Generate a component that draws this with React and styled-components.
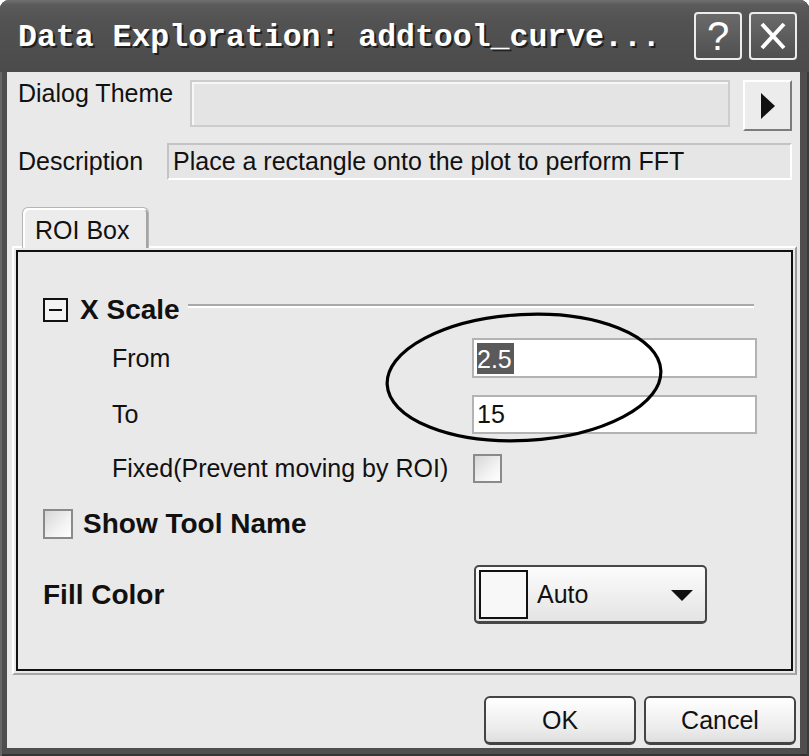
import React from 'react'
import styled, { createGlobalStyle } from 'styled-components'

const GlobalStyle = createGlobalStyle`
  html, body {
    margin: 0;
    padding: 0;
    background: #fff;
  }
  body {
    font-family: "Liberation Sans", Arial, sans-serif;
    color: #111;
  }
  * { box-sizing: border-box; }
`

const Window = styled.div`
  width: 809px;
  height: 756px;
  display: flex;
  flex-direction: column;
  background: #4e4e4e;
  border-radius: 9px 9px 0 0;
  overflow: hidden;
  box-shadow: inset 2px 0 0 #666, inset -2px 0 0 #3a3a3a, inset 0 -2px 0 #333;
`

const TitleBar = styled.div`
  height: 72px;
  flex: none;
  display: flex;
  align-items: center;
  gap: 7px;
  padding: 0 12px 0 18px;
  background: linear-gradient(#707070 0, #5a5a5a 5px, #525252 30%, #4b4b4b 100%);
`

const Title = styled.div`
  flex: 1;
  font-family: "Liberation Mono", "Courier New", monospace;
  font-weight: bold;
  font-size: 31.5px;
  color: #fff;
  text-shadow: 2px 2px 0 #202020;
  white-space: nowrap;
  margin-top: 2px;
`

const CaptionButton = styled.div`
  width: 48px;
  height: 48px;
  border: 2px solid #ececec;
  border-radius: 4px;
  background: linear-gradient(#6a6a6a, #505050);
  display: flex;
  align-items: center;
  justify-content: center;
  color: #fff;
  font-family: "Liberation Sans", Arial, sans-serif;
  font-size: 40px;
  line-height: 1;
`

const Client = styled.div`
  flex: 1;
  margin: 0 9px 8px 7px;
  background: #e9e9e9;
  display: flex;
  flex-direction: column;
  padding-top: 8px;
`

const FieldRow = styled.div`
  display: flex;
  align-items: ${p => (p.$top ? 'flex-start' : 'center')};
  height: ${p => p.$h}px;
  margin-top: ${p => p.$mt || 0}px;
  padding: 0 8px 0 11px;
  font-size: 25px;
`

const RowLabel = styled.div`
  width: ${p => p.$w}px;
  flex: none;
  line-height: 29px;
  margin-top: ${p => (p.$top ? -1 : 0)}px;
`

const ThemeField = styled.div`
  flex: 1;
  height: 47px;
  margin-right: 13px;
  background: #e4e4e4;
  border: 2px solid #cdcdcd;
  box-shadow: inset 2px 2px 0 #f7f7f7;
`

const ArrowButton = styled.div`
  width: 49px;
  height: 51px;
  flex: none;
  background: #ececec;
  border: 2px solid;
  border-color: #fff #7c7c7c #7c7c7c #fff;
  display: flex;
  align-items: center;
  justify-content: center;
`

const DescField = styled.div`
  flex: 1;
  height: 37px;
  background: #e6e6e6;
  border: 2px solid;
  border-color: #c4c4c4 #fff #fff #c4c4c4;
  padding-left: 4px;
  display: flex;
  align-items: center;
  white-space: nowrap;
`

const TabStrip = styled.div`
  margin-top: 27px;
  padding-left: 15px;
  display: flex;
  position: relative;
  z-index: 1;
  margin-bottom: -2px;
`

const Tab = styled.div`
  width: 127px;
  height: 41px;
  border: 1px solid #b5b5b5;
  border-bottom: none;
  border-radius: 6px 6px 0 0;
  background: #ececec;
  box-shadow: inset 2px 2px 0 #fff, inset -2px 0 0 #a4a4a4;
  font-size: 25px;
  padding: 8px 0 0 12px;
`

const Panel = styled.div`
  height: 429px;
  margin: 0 3px 0 5px;
  border: 2px solid;
  border-color: #fff #9c9c9c #a6a6a6 #fff;
  padding: 2px;
`

const Inner = styled.div`
  position: relative;
  height: 100%;
  border: 2px solid #111;
  border-color: #111 #111 #111 #111;
  padding: 46px 32px 0 25px;
  display: flex;
  flex-direction: column;
`

const SectionHeader = styled.div`
  display: flex;
  align-items: center;
  height: 24px;
  margin-right: 5px;
`

const CollapseBox = styled.div`
  width: 25px;
  height: 24px;
  border: 2px solid #111;
  background: #f4f4f4;
  margin-right: 12px;
  display: flex;
  align-items: center;
  justify-content: center;
  &::after {
    content: '';
    width: 13px;
    height: 2px;
    background: #111;
  }
`

const BoldLabel = styled.div`
  font-weight: bold;
  font-size: 28px;
  line-height: 32px;
  width: ${p => (p.$w ? `${p.$w}px` : 'auto')};
  flex: none;
`

const HeaderRule = styled.div`
  flex: 1;
  height: 4px;
  margin: -8px 0 0 8px;
  border-top: 2px solid #a9a9a9;
  border-bottom: 2px solid #fff;
`

const SubRow = styled.div`
  display: flex;
  align-items: center;
  margin-top: ${p => p.$mt}px;
  padding-left: ${p => (p.$indent ? 69 : 0)}px;
  font-size: 25px;
`

const SubLabel = styled.div`
  width: 360px;
  flex: none;
  white-space: nowrap;
`

const TextInput = styled.div`
  width: 285px;
  height: ${p => p.$h}px;
  background: #fff;
  border: 2px solid #b3b3b3;
  padding-left: 3px;
  display: flex;
  align-items: center;
`

const Selected = styled.span`
  background: #5a5a5a;
  color: #fff;
  padding: 2px 2px 1px 0;
  line-height: 28px;
`

const CheckBox = styled.div`
  width: ${p => p.$s}px;
  height: ${p => p.$s}px;
  flex: none;
  margin-left: ${p => p.$ml || 0}px;
  border: 2px solid #8a8a8a;
  background: linear-gradient(135deg, #d6d6d6, #f2f2f2 60%, #fff);
`

const ColorDropdown = styled.div`
  width: 233px;
  height: 59px;
  border: 2px solid #474747;
  border-bottom-width: 3px;
  border-radius: 5px;
  background: linear-gradient(#fcfcfc, #e4e4e4);
  display: flex;
  align-items: center;
  padding: 0 12px 0 3px;
  margin-left: 0;
`

const Swatch = styled.div`
  width: 49px;
  height: 49px;
  border: 2px solid #111;
  background: #f8f8f8;
  margin-right: 9px;
`

const DropText = styled.div`
  flex: 1;
  font-size: 25px;
`

const DownArrow = styled.div`
  width: 0;
  height: 0;
  border-left: 11px solid transparent;
  border-right: 11px solid transparent;
  border-top: 11px solid #111;
  margin-top: 2px;
`

const Annotation = styled.svg`
  position: absolute;
  left: 365px;
  top: 58px;
  overflow: visible;
  pointer-events: none;
`

const ButtonBar = styled.div`
  display: flex;
  justify-content: flex-end;
  gap: 8px;
  margin-top: 21px;
  padding-right: 4px;
`

const PushButton = styled.div`
  width: 152px;
  height: 49px;
  border: 2px solid #444;
  border-bottom-width: 3px;
  border-radius: 6px;
  background: linear-gradient(#ffffff, #ececec 70%, #dedede);
  display: flex;
  align-items: center;
  justify-content: center;
  font-size: 25px;
`

export default function App() {
  return (
    <>
      <GlobalStyle />
      <Window>
        <TitleBar>
          <Title>Data Exploration: addtool_curve...</Title>
          <CaptionButton>?</CaptionButton>
          <CaptionButton>
            <svg width="26" height="28" viewBox="0 0 26 28">
              <path d="M2 2 L24 26 M24 2 L2 26" stroke="#fff" strokeWidth="4" />
            </svg>
          </CaptionButton>
        </TitleBar>
        <Client>
          <FieldRow $h={51} $top>
            <RowLabel $w={172} $top>Dialog Theme</RowLabel>
            <ThemeField />
            <ArrowButton>
              <svg width="14" height="26" viewBox="0 0 14 26">
                <path d="M0 0 L14 13 L0 26 Z" fill="#111" />
              </svg>
            </ArrowButton>
          </FieldRow>
          <FieldRow $h={37} $mt={12}>
            <RowLabel $w={149}>Description</RowLabel>
            <DescField>Place a rectangle onto the plot to perform FFT</DescField>
          </FieldRow>
          <TabStrip>
            <Tab>ROI Box</Tab>
          </TabStrip>
          <Panel>
            <Inner>
              <SectionHeader>
                <CollapseBox />
                <BoldLabel>X Scale</BoldLabel>
                <HeaderRule />
              </SectionHeader>
              <SubRow $mt={16} $indent>
                <SubLabel>From</SubLabel>
                <TextInput $h={40}><Selected>2.5</Selected></TextInput>
              </SubRow>
              <SubRow $mt={17} $indent>
                <SubLabel>To</SubLabel>
                <TextInput $h={39}>15</TextInput>
              </SubRow>
              <SubRow $mt={20} $indent>
                <SubLabel>Fixed(Prevent moving by ROI)</SubLabel>
                <CheckBox $s={29} $ml={1} />
              </SubRow>
              <SubRow $mt={25}>
                <CheckBox $s={30} />
                <BoldLabel style={{ marginLeft: 10 }}>Show Tool Name</BoldLabel>
              </SubRow>
              <SubRow $mt={25}>
                <BoldLabel $w={431}>Fill Color</BoldLabel>
                <ColorDropdown>
                  <Swatch />
                  <DropText>Auto</DropText>
                  <DownArrow />
                </ColorDropdown>
              </SubRow>
              <Annotation width="282" height="135" viewBox="0 0 282 135">
                <ellipse
                  cx="141"
                  cy="67.5"
                  rx="137"
                  ry="63"
                  fill="none"
                  stroke="#000"
                  strokeWidth="3.2"
                  transform="rotate(-3 141 67.5)"
                />
              </Annotation>
            </Inner>
          </Panel>
          <ButtonBar>
            <PushButton>OK</PushButton>
            <PushButton>Cancel</PushButton>
          </ButtonBar>
        </Client>
      </Window>
    </>
  )
}
